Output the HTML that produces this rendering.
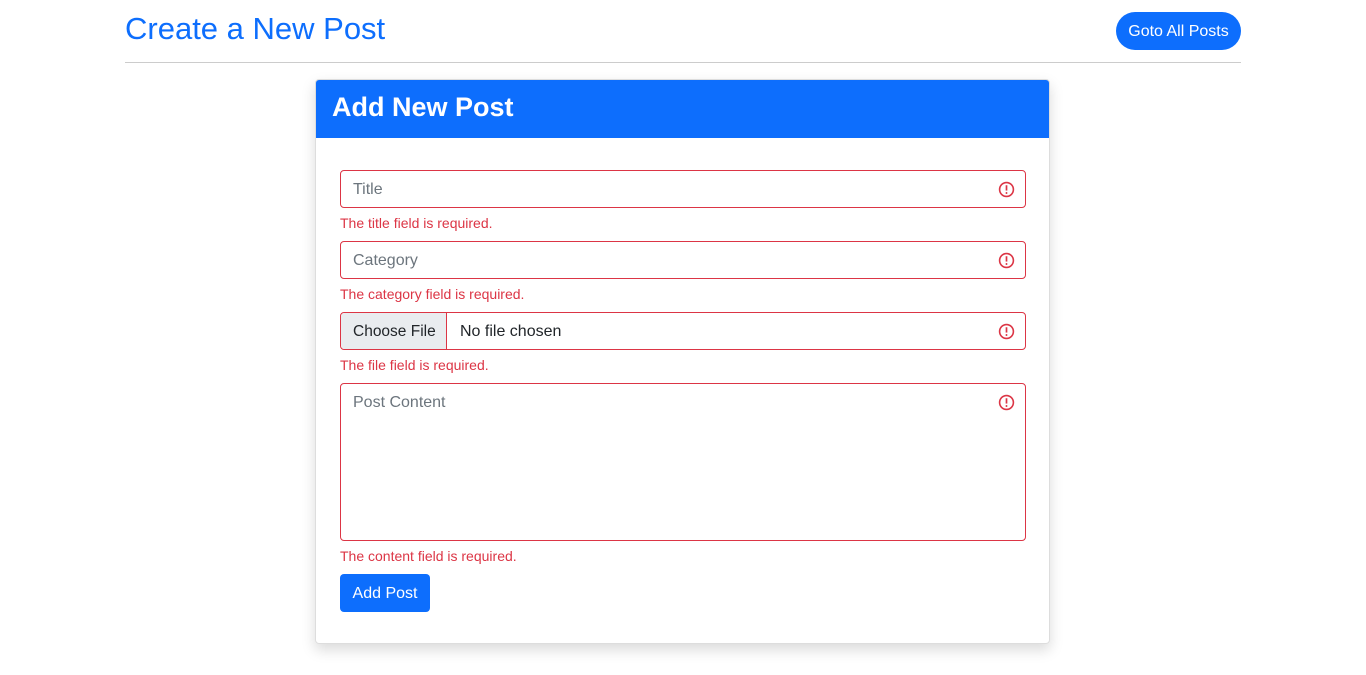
<!DOCTYPE html><html><head><style>
*{box-sizing:border-box}body{margin:0;font-family:"Liberation Sans",sans-serif;color:#212529;background:#fff}
.h1{position:absolute;left:125px;top:9px;font-size:31px;color:#0d6efd;line-height:40px}
.gb{position:absolute;left:1116px;top:12px;width:125px;height:38px;border-radius:19px;background:#0d6efd;color:#fff;font-size:16px;line-height:40px;text-align:center}
.hr{position:absolute;left:125px;top:62px;width:1116px;height:1px;background:#ccc}
.card{position:absolute;left:315px;top:79px;width:735px;height:565px;border:1px solid #ddd;border-radius:4px;box-shadow:0 6px 14px rgba(0,0,0,.15);overflow:hidden}
.ch{height:58px;background:#0d6efd;color:#fff;font-weight:bold;font-size:27px;line-height:54px;padding-left:16px}
.in{position:absolute;left:24px;width:686px;height:38px;border:1px solid #dc3545;border-radius:4px;font-size:16px;color:#6c757d;padding:0 12px;line-height:38px}
.err{position:absolute;left:24px;font-size:14px;color:#dc3545}
.ic{position:absolute;right:10px;top:10px;width:17px;height:17px}
.fb{position:absolute;left:0;top:0;bottom:0;width:106px;background:#e9ecef;border-right:1px solid #dc3545;color:#212529;padding-left:12px;border-radius:4px 0 0 4px;font-size:15.5px}
.btn{position:absolute;left:24px;top:494px;width:90px;height:38px;background:#0d6efd;color:#fff;border-radius:4px;font-size:16px;line-height:40px;text-align:center}
</style></head><body>
<div class="h1">Create a New Post</div><div class="gb">Goto All Posts</div><div class="hr"></div>
<div class="card"><div class="ch">Add New Post</div>
<div class="in" style="top:90px">Title<svg class="ic" viewBox="0 0 16 16"><circle cx="8" cy="8" r="6.5" fill="none" stroke="#dc3545" stroke-width="1.5"/><rect x="7.2" y="4" width="1.6" height="5" fill="#dc3545"/><circle cx="8" cy="11.3" r="0.9" fill="#dc3545"/></svg></div>
<div class="err" style="top:135px">The title field is required.</div>
<div class="in" style="top:161px">Category<svg class="ic" viewBox="0 0 16 16"><circle cx="8" cy="8" r="6.5" fill="none" stroke="#dc3545" stroke-width="1.5"/><rect x="7.2" y="4" width="1.6" height="5" fill="#dc3545"/><circle cx="8" cy="11.3" r="0.9" fill="#dc3545"/></svg></div>
<div class="err" style="top:206px">The category field is required.</div>
<div class="in" style="top:232px;color:#212529"><div class="fb">Choose File</div><span style="position:absolute;left:119px">No file chosen</span><svg class="ic" viewBox="0 0 16 16"><circle cx="8" cy="8" r="6.5" fill="none" stroke="#dc3545" stroke-width="1.5"/><rect x="7.2" y="4" width="1.6" height="5" fill="#dc3545"/><circle cx="8" cy="11.3" r="0.9" fill="#dc3545"/></svg></div>
<div class="err" style="top:277px">The file field is required.</div>
<div class="in" style="top:303px;height:158px">Post Content<svg class="ic" viewBox="0 0 16 16"><circle cx="8" cy="8" r="6.5" fill="none" stroke="#dc3545" stroke-width="1.5"/><rect x="7.2" y="4" width="1.6" height="5" fill="#dc3545"/><circle cx="8" cy="11.3" r="0.9" fill="#dc3545"/></svg></div>
<div class="err" style="top:468px">The content field is required.</div>
<div class="btn">Add Post</div>
</div></body></html>
